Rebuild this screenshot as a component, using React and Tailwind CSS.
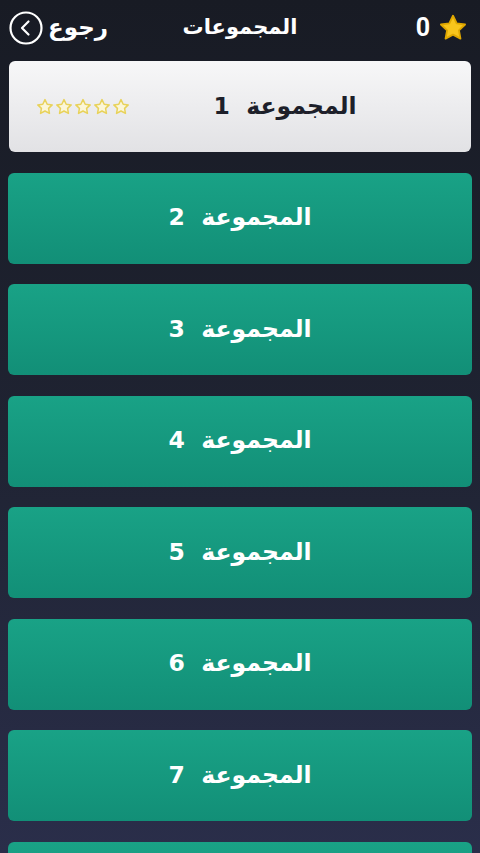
import React from "react";

const groups = [1, 2, 3, 4, 5, 6, 7, 8];

const Star = ({ className = "", fill = "#f8c51c", stroke = "#e0a800", sw = 1.5 }) => (
  <svg viewBox="0 0 24 24" className={className}>
    <path
      d="M12 2.2l2.95 6.1 6.7.9-4.9 4.65 1.2 6.65L12 17.3l-5.95 3.2 1.2-6.65-4.9-4.65 6.7-.9z"
      fill={fill}
      stroke={stroke}
      strokeWidth={sw}
      strokeLinejoin="round"
    />
  </svg>
);

const BackIcon = () => (
  <svg viewBox="0 0 34 34" className="w-[34px] h-[34px]">
    <circle cx="17" cy="17" r="15.5" fill="none" stroke="white" strokeWidth="2.2" />
    <path d="M19.5 10.5L13 17l6.5 6.5" fill="none" stroke="white" strokeWidth="2.2" strokeLinecap="round" strokeLinejoin="round" />
  </svg>
);

export default function App() {
  return (
    <div
      className="w-[480px] bg-gradient-to-b from-[#181b24] via-[#1f2332] to-[#2a2e4a] overflow-hidden"
      style={{ fontFamily: '"DejaVu Sans", "Noto Sans", sans-serif', height: 853 }}
    >
      <div className="h-[55px] flex items-center justify-between px-[9px] relative">
        <div className="flex items-center gap-[5px]">
          <BackIcon />
          <span dir="rtl" className="text-white font-bold text-[23px] leading-none">رجوع</span>
        </div>
        <span dir="rtl" className="absolute left-1/2 -translate-x-1/2 text-white font-bold text-[21px] leading-none">
          المجموعات
        </span>
        <div className="flex items-center gap-[8px] pr-[3px]">
          <span className="text-white font-bold text-[25px] leading-none" style={{ fontFamily: '"Roboto", sans-serif' }}>0</span>
          <Star className="w-[30px] h-[30px]" />
        </div>
      </div>

      <div className="flex flex-col gap-[20.5px] px-[8px] pt-[6px]">
        {groups.map((n) =>
          n === 1 ? (
            <div
              key={n}
              className="h-[91px] shrink-0 mx-[1px] rounded-[6px] bg-gradient-to-b from-[#f7f7f8] to-[#e2e2e5] flex items-center relative"
            >
              <div className="absolute left-[27px] flex gap-[1px]">
                {[0, 1, 2, 3, 4].map((i) => (
                  <Star key={i} className="w-[18px] h-[18px]" fill="#fbf6d8" stroke="#e8d25a" sw={2} />
                ))}
              </div>
              <div dir="rtl" className="w-full flex justify-center pl-[90px]">
                <span className="text-[#1d1f2a] font-bold text-[23.5px] leading-none whitespace-pre">المجموعة  {n}</span>
              </div>
            </div>
          ) : (
            <div
              key={n}
              className="h-[91px] shrink-0 rounded-[6px] bg-gradient-to-b from-[#19a286] to-[#128f77] flex items-center justify-center"
            >
              {n < 8 && (
                <span dir="rtl" className="text-white font-bold text-[23.5px] leading-none whitespace-pre">المجموعة  {n}</span>
              )}
            </div>
          )
        )}
      </div>
    </div>
  );
}
